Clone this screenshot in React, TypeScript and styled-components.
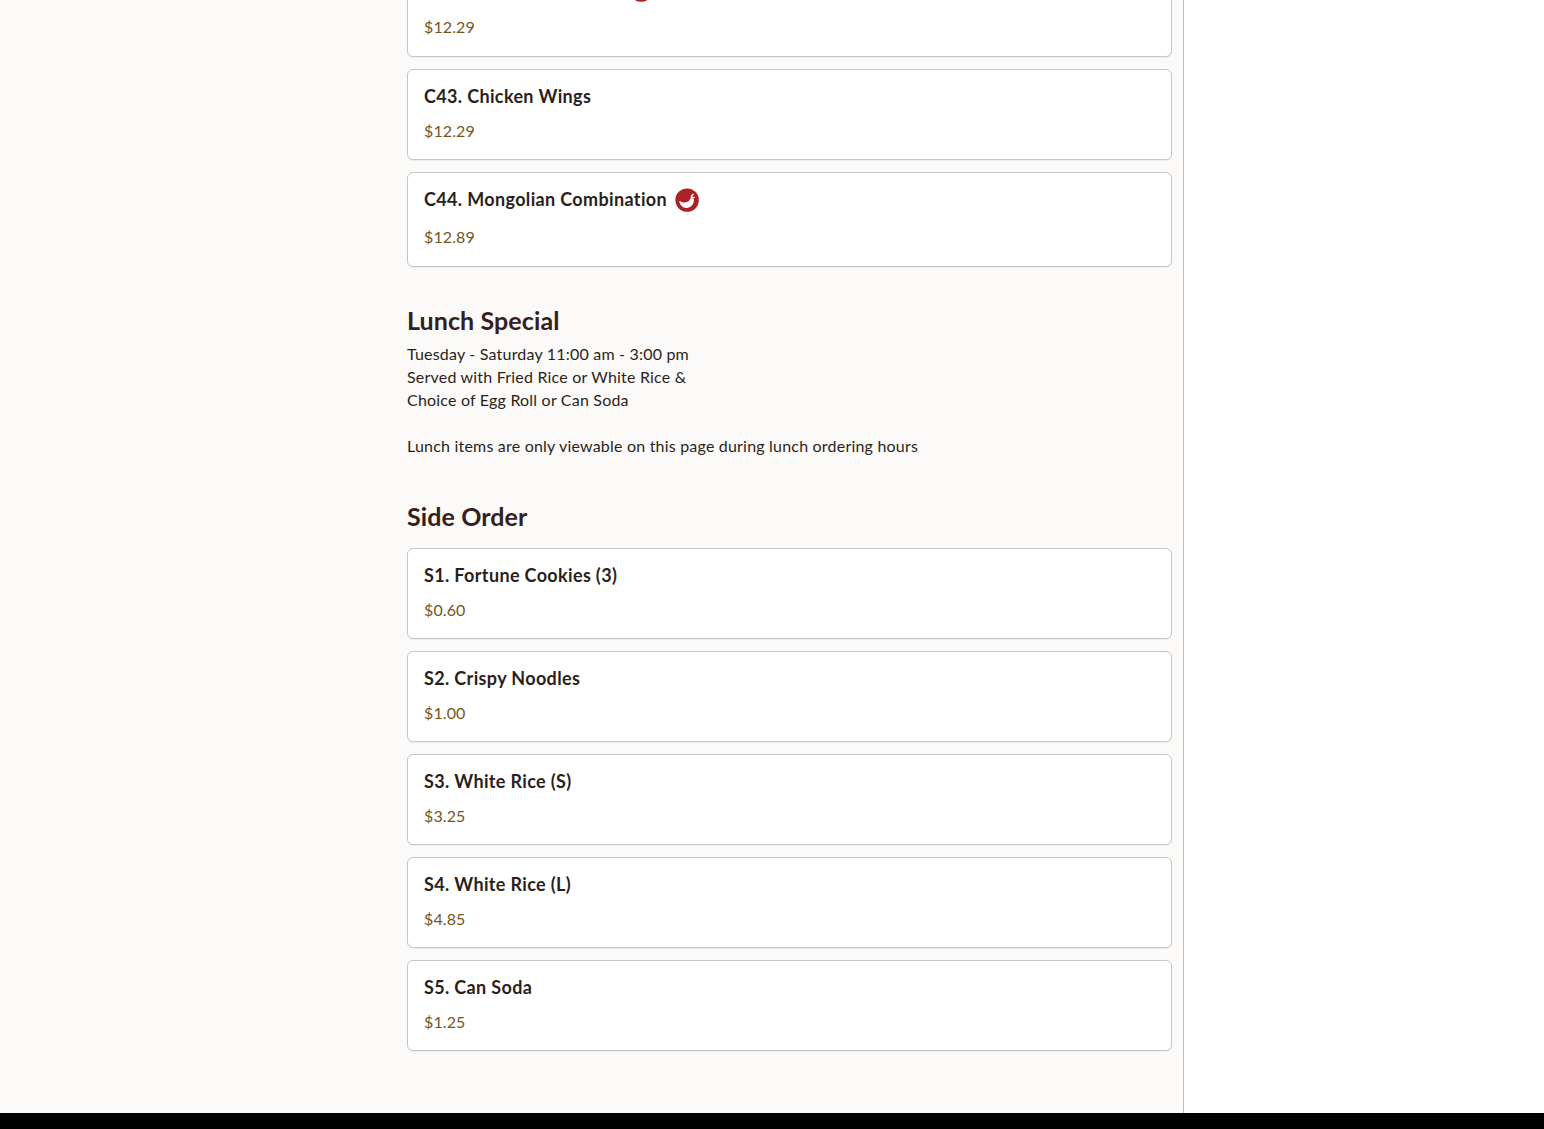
import React from "react";
import styled, { createGlobalStyle } from "styled-components";

const Global = createGlobalStyle`
  html, body { margin: 0; padding: 0; height: 1129px; overflow: hidden; background: #fff; }
  body { font-family: "Lato", "Noto Sans", sans-serif; color: #2b1f1c; }
`;
const Page = styled.div`
  display: flex;
  flex-direction: column;
  height: 1129px;
  overflow: hidden;
`;
const Body = styled.div`
  flex: 1;
  min-height: 0;
  display: flex;
`;
const Column = styled.main`
  width: 776px;
  padding-left: 407px;
  background: #fbfaf8;
  border-right: 1px solid #c0bebc;
`;
const Inner = styled.div`
  width: 765px;
  margin-top: -38px;
`;
const Section = styled.section`
  margin-bottom: 36px;
`;
const Heading = styled.h2`
  margin: 0 0 5px;
  font-size: 25px;
  line-height: 34px;
  font-weight: 700;
  letter-spacing: 0.1px;
  color: #33201c;
`;
const Note = styled.p`
  margin: 0;
  padding-bottom: 6px;
  font-size: 16px;
  line-height: 23px;
  letter-spacing: 0.2px;
  color: #2b1f1c;
  white-space: pre-line;
`;
const List = styled.div<{ $gapTop?: boolean }>`
  display: flex;
  flex-direction: column;
  gap: 12px;
  margin-top: ${(p) => (p.$gapTop ? "15px" : "0")};
`;
const Card = styled.article<{ $hot?: boolean }>`
  background: #fff;
  border: 1px solid #c6c6c4;
  border-radius: 6px;
  padding: 13px 16px ${(p) => (p.$hot ? "16px" : "15px")};
  box-shadow: 0 1px 1px rgba(0, 0, 0, 0.06);
`;
const TitleRow = styled.div`
  display: flex;
  align-items: flex-start;
  gap: 8px;
  margin-bottom: 9px;
`;
const Title = styled.h3`
  margin: 0;
  font-size: 18px;
  line-height: 26px;
  font-weight: 700;
  letter-spacing: 0.35px;
  color: #2b1f1c;
`;
const Price = styled.div`
  font-size: 16px;
  line-height: 26px;
  letter-spacing: 0.1px;
  color: #74561f;
`;
const HotIcon = styled.svg`
  flex: none;
  margin: 2px 0;
`;
const Footer = styled.footer`
  height: 16px;
  background: #000;
  flex: none;
`;

const Chili = () => (
  <HotIcon width="25" height="25" viewBox="0 0 26 26" aria-hidden="true">
    <circle cx="12.6" cy="12.6" r="12.2" fill="#aa2126" />
    <path d="M4.400 13.200c2.800 2 6 2.400 8.600 1.200 1.500-.7 2.500-2 2.800-3.600l3.900.3c.3 5-2.500 9-7 9.600-4.200.5-7.600-2.800-8.300-7.500z" fill="#fff" />
    <path d="M16.300 10.800c-.2-2.300.8-4.300 2.600-5l.7 1.200c-1 .5-1.600 1.300-1.400 2.300l2.300-.3-.1 1.400-2.200.5z" fill="#fff" />
  </HotIcon>
);

type Item = { name: string; price: string; hot?: boolean };
const Row = ({ name, price, hot }: Item) => (
  <Card $hot={hot}>
    <TitleRow>
      <Title>{name}</Title>
      {hot && <Chili />}
    </TitleRow>
    <Price>{price}</Price>
  </Card>
);

const chicken: Item[] = [
  { name: "C42. Szechwan Chicken", price: "$12.29", hot: true },
  { name: "C43. Chicken Wings", price: "$12.29" },
  { name: "C44. Mongolian Combination", price: "$12.89", hot: true },
];
const sides: Item[] = [
  { name: "S1. Fortune Cookies (3)", price: "$0.60" },
  { name: "S2. Crispy Noodles", price: "$1.00" },
  { name: "S3. White Rice (S)", price: "$3.25" },
  { name: "S4. White Rice (L)", price: "$4.85" },
  { name: "S5. Can Soda", price: "$1.25" },
];

export default function App() {
  return (
    <Page>
      <Global />
      <Body>
        <Column>
          <Inner>
            <Section>
              <List>{chicken.map((i) => <Row key={i.name} {...i} />)}</List>
            </Section>
            <Section>
              <Heading>Lunch Special</Heading>
              <Note>{"Tuesday - Saturday 11:00 am - 3:00 pm\nServed with Fried Rice or White Rice &\nChoice of Egg Roll or Can Soda\n\nLunch items are only viewable on this page during lunch ordering hours"}</Note>
            </Section>
            <Section>
              <Heading>Side Order</Heading>
              <List $gapTop>{sides.map((i) => <Row key={i.name} {...i} />)}</List>
            </Section>
          </Inner>
        </Column>
      </Body>
      <Footer />
    </Page>
  );
}
